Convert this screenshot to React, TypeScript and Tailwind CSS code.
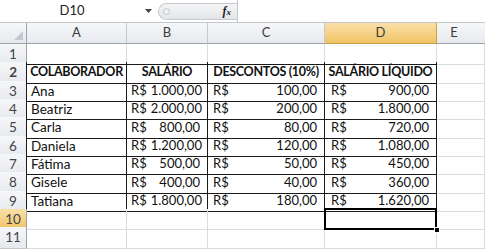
import React from 'react';

const rows = [
  { name: 'Ana', sal: '1.000,00', desc: '100,00', liq: '900,00' },
  { name: 'Beatriz', sal: '2.000,00', desc: '200,00', liq: '1.800,00' },
  { name: 'Carla', sal: '800,00', desc: '80,00', liq: '720,00' },
  { name: 'Daniela', sal: '1.200,00', desc: '120,00', liq: '1.080,00' },
  { name: 'Fátima', sal: '500,00', desc: '50,00', liq: '450,00' },
  { name: 'Gisele', sal: '400,00', desc: '40,00', liq: '360,00' },
  { name: 'Tatiana', sal: '1.800,00', desc: '180,00', liq: '1.620,00' },
];

const grid = 'grid grid-cols-[27px_100px_81px_117px_112px_1fr] h-[18.35px]';
const cell = 'border-r border-b border-[#dadcdd]';
const tcell = 'border-r border-b border-[#1a1a1a] flex items-center whitespace-nowrap overflow-hidden';

function RowHead({ n, active, black }: { n: number; active?: boolean; black?: boolean }) {
  return (
    <div
      className={`flex items-center justify-center text-[13.5px] text-[#444] border-b border-r ${
        active
          ? 'bg-gradient-to-b from-[#f9e0a8] to-[#f1c462] border-b-[#c9a24d]'
          : 'bg-gradient-to-b from-[#f6f7f9] to-[#e6e9ee] border-b-[#c5c9cf]'
      } ${black ? 'border-r-[#1a1a1a]' : 'border-r-[#9ea3aa]'}`}
    >
      {n}
    </div>
  );
}

function Money({ v, pl }: { v: string; pl: string }) {
  return (
    <div className={`${tcell} justify-between gap-[4px] text-[13px] ${pl} pr-[7px]`}>
      <span>R$</span>
      <span>{v}</span>
    </div>
  );
}

export default function App() {
  return (
    <div className="w-[485px] h-[249px] overflow-hidden bg-white text-[#111] font-['Lato','Liberation_Sans',sans-serif]">
      {/* name box + formula bar */}
      <div className="h-[23px] flex items-center border-b border-[#c3c7cc] relative">
        <div className="w-[140px] flex justify-center text-[13px] text-[#222] pl-[4px]">D10</div>
        <div className="w-[16px] flex justify-center">
          <svg width="7" height="4" viewBox="0 0 7 4">
            <path d="M0 0h7L3.5 4z" fill="#444" />
          </svg>
        </div>
        <div className="ml-[2px] w-[79px] h-[17px] rounded-l-[9px] bg-gradient-to-b from-[#f4f5f6] to-[#e3e5e8] border border-[#c7cbd0] border-r-0 flex items-center relative">
          <div className="ml-[4px] w-[7px] h-[7px] rounded-full border border-[#c3c7cc] bg-[#eef0f2]" />
          <span className="ml-auto mr-[6px] italic font-bold text-[12px] font-['Liberation_Serif',serif] text-[#222]">
            f<span className="text-[9px]">x</span>
          </span>
        </div>
        <div className="w-px h-[23px] bg-[#c3c7cc]" />
      </div>

      {/* column headers */}
      <div className="grid grid-cols-[27px_100px_81px_117px_112px_1fr] h-[21px] text-[13px] text-[#3b3b3b]">
        <div className="bg-gradient-to-b from-[#f6f7f9] to-[#e6e9ee] border-r border-b border-[#9ea3aa] relative">
          <svg className="absolute right-[3px] bottom-[3px]" width="9" height="9" viewBox="0 0 9 9">
            <path d="M9 0V9H0z" fill="#c4c8cd" />
          </svg>
        </div>
        {['A', 'B', 'C'].map((c) => (
          <div
            key={c}
            className="flex items-center justify-center bg-gradient-to-b from-[#f6f7f9] to-[#e6e9ee] border-r border-r-[#c5c9cf] border-b border-b-[#9ea3aa]"
          >
            {c}
          </div>
        ))}
        <div className="flex items-center justify-center bg-gradient-to-b from-[#f9e0a8] to-[#f1c462] border-r border-r-[#c9a24d] border-b border-b-[#c9a24d]">
          D
        </div>
        <div className="flex items-center justify-center pr-[14px] bg-gradient-to-b from-[#f6f7f9] to-[#e6e9ee] border-b border-[#9ea3aa]">
          E
        </div>
      </div>

      {/* row 1 */}
      <div className={grid}>
        <RowHead n={1} />
        <div className="border-r border-b border-r-[#dadcdd] border-b-[#1a1a1a]" />
        <div className="border-r border-b border-r-[#dadcdd] border-b-[#1a1a1a]" />
        <div className="border-r border-b border-r-[#dadcdd] border-b-[#1a1a1a]" />
        <div className="border-r border-b border-r-[#dadcdd] border-b-[#1a1a1a]" />
        <div className={cell} />
      </div>

      {/* row 2 headers */}
      <div className={`${grid} text-[12.5px] font-bold tracking-[-0.3px]`}>
        <RowHead n={2} black />
        <div className={`${tcell} justify-center`}>COLABORADOR</div>
        <div className={`${tcell} justify-center`}>SALÁRIO</div>
        <div className={`${tcell} justify-center`}>DESCONTOS (10%)</div>
        <div className={`${tcell} justify-center`}>SALÁRIO LÍQUIDO</div>
        <div className={cell} />
      </div>

      {rows.map((r, i) => (
        <div key={r.name} className={`${grid} text-[13.5px]`}>
          <RowHead n={i + 3} black />
          <div className={`${tcell} pl-[4px]`}>{r.name}</div>
          <Money v={r.sal} pl="pl-[4px]" />
          <Money v={r.desc} pl="pl-[5px]" />
          <Money v={r.liq} pl="pl-[6px]" />
          <div className={cell} />
        </div>
      ))}

      {/* row 10 with selection */}
      <div className={grid}>
        <RowHead n={10} active />
        <div className={cell} />
        <div className={cell} />
        <div className={cell} />
        <div className="relative border-r border-b border-[#dadcdd]">
          <div className="absolute -left-[1px] -top-[1px] -right-[1px] -bottom-[1px] border-2 border-black" />
          <div className="absolute -right-[4px] -bottom-[4px] w-[6px] h-[6px] bg-black border border-white" />
        </div>
        <div className={cell} />
      </div>

      {/* row 11 */}
      <div className={grid}>
        <RowHead n={11} />
        <div className={cell} />
        <div className={cell} />
        <div className={cell} />
        <div className={cell} />
        <div className={cell} />
      </div>
    </div>
  );
}
